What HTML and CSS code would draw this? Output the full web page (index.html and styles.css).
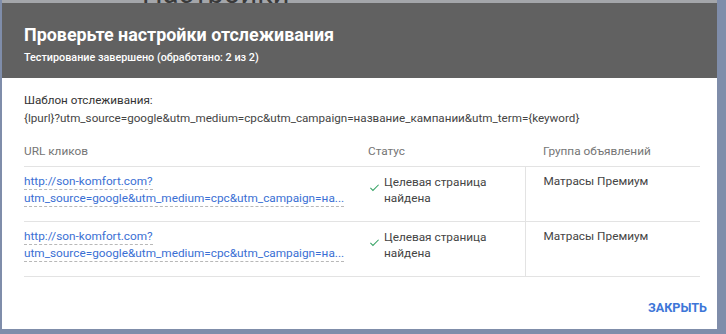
FILE: index.html
```html
<!DOCTYPE html>
<html lang="ru">
<head>
<meta charset="utf-8">
<title>Проверьте настройки отслеживания</title>
<link rel="stylesheet" href="styles.css">
</head>
<body>
<div class="underlay"><span class="under-title">Настройки</span></div>
<div class="dialog">
  <div class="header">
    <h1 class="title">Проверьте настройки отслеживания</h1>
    <p class="subtitle">Тестирование завершено (обработано: 2 из 2)</p>
  </div>
  <div class="content">
    <div class="tpl-label">Шаблон отслеживания:</div>
    <div class="tpl">{lpurl}?utm_source=google&amp;utm_medium=cpc&amp;utm_campaign=название_кампании&amp;utm_term={keyword}</div>
    <table class="results">
      <thead>
        <tr>
          <th class="c-url">URL кликов</th>
          <th class="c-status">Статус</th>
          <th class="c-group">Группа объявлений</th>
        </tr>
      </thead>
      <tbody>
        <tr>
          <td class="c-url"><a class="link" href="#"><span class="ln">http://son-komfort.com?</span><span class="ln">utm_source=google&amp;utm_medium=cpc&amp;utm_campaign=на...</span></a></td>
          <td class="c-status"><div class="status"><svg class="check" viewBox="0 0 12 12" width="11" height="11"><path d="M1.5 6.5 L4.3 9.2 L10.5 3" fill="none" stroke="#34a263" stroke-width="1.1"/></svg><span>Целевая страница<br>найдена</span></div></td>
          <td class="c-group">Матрасы Премиум</td>
        </tr>
        <tr>
          <td class="c-url"><a class="link" href="#"><span class="ln">http://son-komfort.com?</span><span class="ln">utm_source=google&amp;utm_medium=cpc&amp;utm_campaign=на...</span></a></td>
          <td class="c-status"><div class="status"><svg class="check" viewBox="0 0 12 12" width="11" height="11"><path d="M1.5 6.5 L4.3 9.2 L10.5 3" fill="none" stroke="#34a263" stroke-width="1.1"/></svg><span>Целевая страница<br>найдена</span></div></td>
          <td class="c-group">Матрасы Премиум</td>
        </tr>
      </tbody>
    </table>
  </div>
  <div class="actions">
    <button class="btn" type="button">Закрыть</button>
  </div>
</div>
</body>
</html>
```
FILE: styles.css
```css
* { box-sizing: border-box; }
html, body { height: 100%; }
body {
  margin: 0;
  padding: 3px 9px 5px 2px;
  background: #7f8daa;
  font-family: Roboto, "Liberation Sans", Arial, sans-serif;
  position: relative;
  overflow: hidden;
}
.underlay {
  position: absolute;
  top: 0; left: 2px; right: 9px;
  height: 8px;
  background: #a4a6aa;
  overflow: hidden;
}
.under-title {
  position: absolute;
  left: 140px;
  top: -24px;
  font-size: 29px;
  color: #3a3a3a;
  white-space: nowrap;
}
.dialog {
  position: relative;
  background: #fff;
  height: 326px;
  display: flex;
  flex-direction: column;
}
.header {
  background: #616161;
  height: 75px;
  padding: 21px 22px 0;
  color: #fff;
}
.title {
  margin: 0;
  font-size: 17.9px;
  line-height: 22px;
  font-weight: 700;
}
.subtitle {
  margin: 3px 0 0;
  font-size: 10.8px;
  line-height: 17px;
  font-weight: 500;
}
.content {
  padding: 15px 17px 0 22px;
  color: #333;
  font-size: 11.65px;
}
.tpl-label { line-height: 14px; color: #333; }
.tpl { line-height: 14px; color: #444; margin-top: 4px; }
.results {
  width: 100%;
  border-collapse: collapse;
  margin-top: 11px;
  font-size: 11.8px;
}
.results th {
  text-align: left;
  font-weight: 400;
  color: #757575;
  padding: 8px 0 8px;
  line-height: 14px;
  border-bottom: 1px solid #e3e3e3;
}
.results td {
  vertical-align: top;
  padding: 7px 0 0;
  height: 55px;
  line-height: 16px;
  border-bottom: 1px solid #e3e3e3;
  color: #444;
}
.c-url { width: 344px; }
.c-status { width: 157px; }
.results td.c-status { border-right: 1px solid #e3e3e3; padding-top: 5px; }
.results th.c-group { padding-left: 18px; }
.results td.c-group { padding-left: 18px; padding-top: 6px; }
.link {
  color: #3a6fd4;
  text-decoration: none;
  display: flex;
  flex-direction: column;
  align-items: flex-start;
}
.ln {
  display: inline-block;
  line-height: 15px;
  border-bottom: 1px dashed #b8b8b8;
  margin-bottom: 1px;
}
.status {
  display: flex;
  align-items: flex-start;
  gap: 4px;
  padding-top: 2px;
}
.check { margin-top: 8px; flex: none; margin-left: 1px; }
.actions {
  margin-top: auto;
  display: flex;
  justify-content: flex-end;
  padding: 0 2px 5px 0;
}
.btn {
  background: none;
  border: 0;
  font-family: Roboto, "Liberation Sans", Arial, sans-serif;
  font-size: 12.6px;
  font-weight: 700;
  text-transform: uppercase;
  color: #3d76d8;
  padding: 8px 8px;
  line-height: 16px;
  cursor: pointer;
}
```
